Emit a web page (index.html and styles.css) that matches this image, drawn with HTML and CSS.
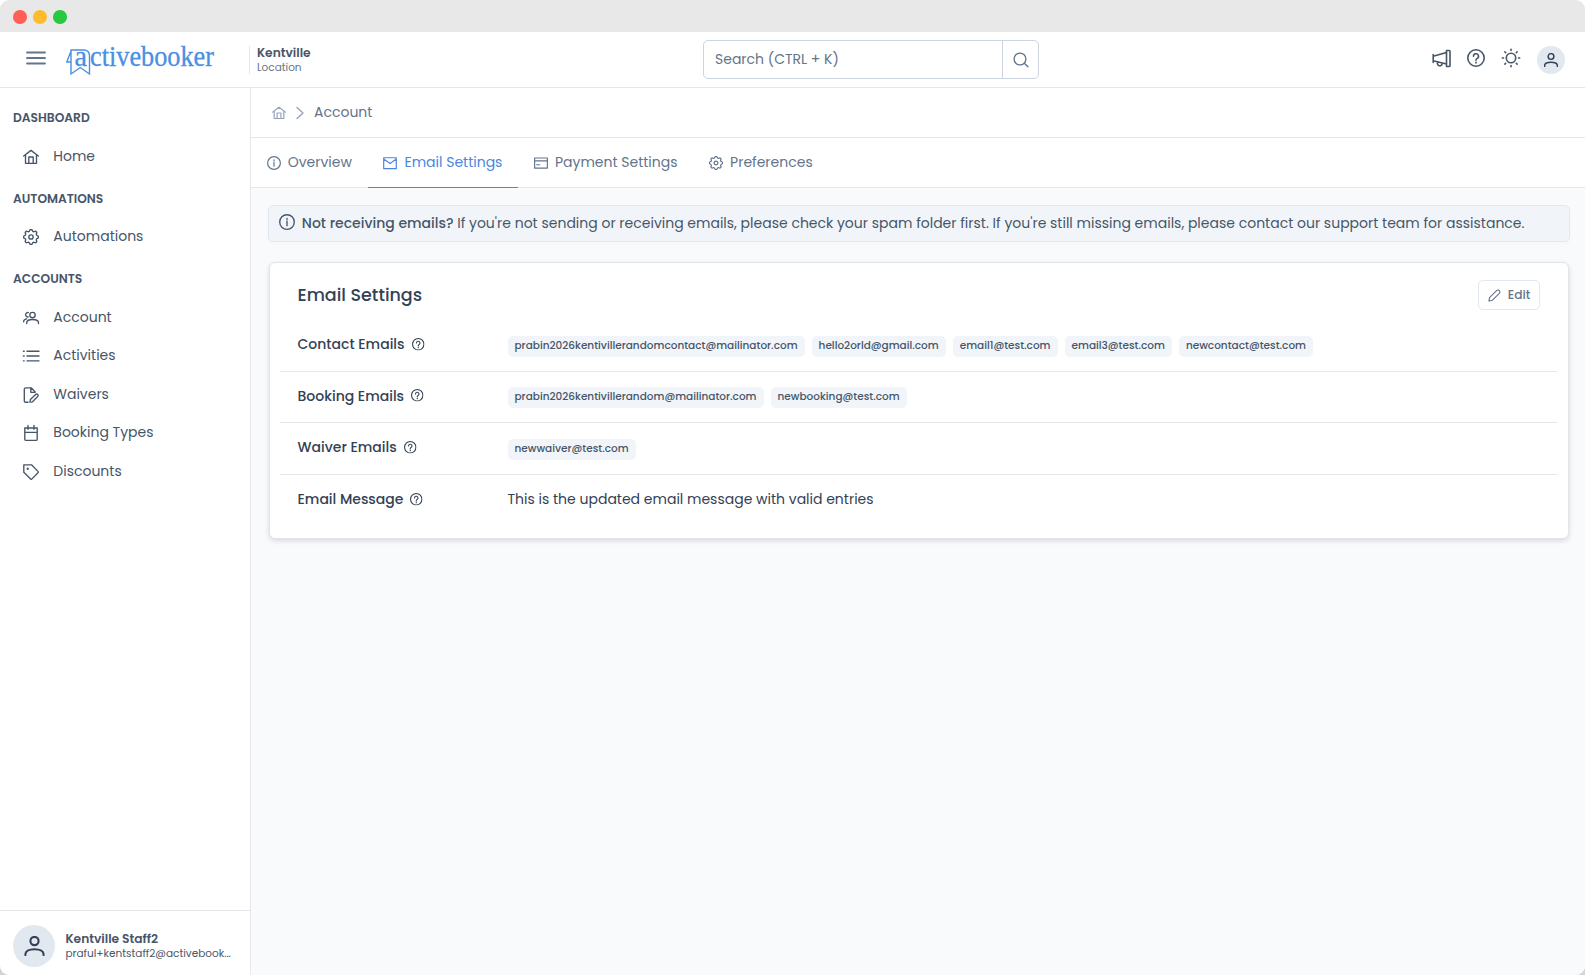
FILE: index.html
```html
<!DOCTYPE html>
<html lang="en">

<head>
    <meta charset="UTF-8">
    <meta name="viewport" content="width=device-width, initial-scale=1.0">
    <title>Activebooker - Email Settings</title>
    <link rel="stylesheet" href="styles.css">
</head>

<body>
    <!-- Shared icons -->
    <svg class="sprite" width="0" height="0">
        <symbol id="i-home" viewBox="0 0 16 16">
            <path d="M.7 7 8 1.4 15.300 7M2.500 5.800V14.300h11V5.800M5.800 14.300V8h4.400v6.300" />
        </symbol>
        <symbol id="i-gear" viewBox="2.400 2.400 19.200 19.200">
            <path d="M10.325 4.317c.426 -1.756 2.924 -1.756 3.350 0a1.724 1.724 0 0 0 2.573 1.066c1.543 -.94 3.310 .826 2.370 2.370a1.724 1.724 0 0 0 1.065 2.572c1.756 .426 1.756 2.924 0 3.350a1.724 1.724 0 0 0 -1.066 2.573c.94 1.543 -.826 3.310 -2.370 2.370a1.724 1.724 0 0 0 -2.572 1.065c-.426 1.756 -2.924 1.756 -3.350 0a1.724 1.724 0 0 0 -2.573 -1.066c-1.543 .94 -3.310 -.826 -2.370 -2.370a1.724 1.724 0 0 0 -1.065 -2.572c-1.756 -.426 -1.756 -2.924 0 -3.350a1.724 1.724 0 0 0 1.066 -2.573c-.94 -1.543 .826 -3.310 2.370 -2.370c1 .608 2.296 .07 2.572 -1.065z" />
            <circle cx="12" cy="12" r="2.600" />
        </symbol>
        <symbol id="i-info" viewBox="0 0 16 16">
            <circle cx="8" cy="8" r="7.300" />
            <path d="M8 7v4.700M8 4.300v1" />
        </symbol>
        <symbol id="i-help" viewBox="0 0 18 18">
            <circle cx="9" cy="9" r="8.200" />
            <path d="M6.500 7.200a2.500 2.500 0 1 1 3.700 2.200c-.8.400-1.200.9-1.200 1.800M9 13.200v.7" />
        </symbol>
        <symbol id="i-user" viewBox="0 0 22 22">
            <circle cx="11" cy="5.500" r="4.500" />
            <path d="M1 21v-1c0-3 3.500-5.500 10-5.500s10 2.500 10 5.500v1" />
        </symbol>
    </svg>

    <div class="window">
        <!-- Window bar -->
        <div class="titlebar">
            <span class="dot red"></span>
            <span class="dot yellow"></span>
            <span class="dot green"></span>
        </div>

        <!-- Header -->
        <header class="header">
            <div class="header-left">
                <svg class="icon menu-icon" viewBox="0 0 18 14"><path d="M0 1.500h18M0 7h18M0 12.500h18" /></svg>
                <svg class="logo" viewBox="0 0 150 34">
                    <text x="8.500" y="22.600" textLength="12.500" lengthAdjust="spacingAndGlyphs">a</text>
                    <text x="24" y="22.600" textLength="124" lengthAdjust="spacingAndGlyphs">ctivebooker</text>
                    <path d="M5 19H.8L5.300 7.200M5 31V7h12.500q6 0 6 6V31l-9.200-6.500z" />
                </svg>
                <div class="location">
                    <strong>Kentville</strong>
                    <span>Location</span>
                </div>
            </div>
            <div class="search">
                <input type="text" placeholder="Search (CTRL + K)">
                <button>
                    <svg class="icon" viewBox="0 0 16 16"><circle cx="7" cy="7" r="5.900" /><path d="m11.300 11.300 3.700 3.500" /></svg>
                </button>
            </div>
            <div class="header-right">
                <svg class="icon i-horn" viewBox="0 0 20 19"><path d="M1.200 5.500v8M1.200 7.300 14.500 3.500v11.500L1.200 11.700zM14.500 1.500h2.700a.8.800 0 0 1 .8.800v14.400a.8.800 0 0 1-.8.800h-2.700zM5.500 13v1.200a2.300 2.300 0 0 0 4.600.6V14" /></svg>
                <svg class="icon i-question"><use href="#i-help" /></svg>
                <svg class="icon i-sun" viewBox="0 0 18 18"><circle cx="9" cy="9" r="4.700" /><path d="M9 .3v1.200M9 16.500v1.200M.3 9h1.200M16.500 9h1.200M2.900 2.900l.8.800M14.300 14.300l.8.800M2.900 15.100l.8-.8M14.300 3.700l.8-.8" /></svg>
                <div class="avatar avatar-small"><svg class="icon"><use href="#i-user" /></svg></div>
            </div>
        </header>

        <div class="container">
            <!-- Sidebar -->
            <aside class="sidebar">
                <nav class="menu">
                    <h2>DASHBOARD</h2>
                    <a><svg class="icon"><use href="#i-home" /></svg><span>Home</span></a>
                    <h2>AUTOMATIONS</h2>
                    <a><svg class="icon gear"><use href="#i-gear" /></svg><span>Automations</span></a>
                    <h2>ACCOUNTS</h2>
                    <a><svg class="icon" viewBox="0 0 16 16"><circle cx="9.500" cy="5" r="2.700" /><path d="M3.700 13.500v-.7c0-2 2.200-3.300 5.800-3.300s6 1.300 6 3.300v.7M5.300 2.600a2.200 2.200 0 1 0 0 4.300M.6 11.800c0-1.800 1-2.700 3-3" /></svg><span>Account</span></a>
                    <a><svg class="icon" viewBox="0 0 16 16"><path d="M4 3.200h12M4 8h12M4 12.800h12M.4 3.200h.8M.4 8h.8M.4 12.800h.8" /></svg><span>Activities</span></a>
                    <a><svg class="icon" viewBox="0 0 16 16"><path d="M5 15.200H2.600a1.300 1.300 0 0 1-1.300-1.300V2.100A1.300 1.300 0 0 1 2.600.8h5.600l4 4.200M7.800.8v4.500h4.400M7 15.200l.4-2.600 5.200-5.100a1.400 1.400 0 0 1 2.100 2.100l-5.200 5.200z" /></svg><span>Waivers</span></a>
                    <a><svg class="icon" viewBox="0 0 16 16"><path d="M1.800 3h12.400v11.500a.8.800 0 0 1-.8.800H2.600a.8.800 0 0 1-.8-.8zM1.800 7.300h12.400M5 .3v4M11 .3v4" /></svg><span>Booking Types</span></a>
                    <a><svg class="icon" viewBox="0 0 16 16"><path d="M.8.800h7.700l6.500 6.600a1 1 0 0 1 0 1.400L9 14.900a1 1 0 0 1-1.400 0L.8 8.300z" /><circle cx="4.700" cy="4.700" r=".5" /></svg><span>Discounts</span></a>
                </nav>
                <div class="profile">
                    <div class="avatar avatar-large"><svg class="icon"><use href="#i-user" /></svg></div>
                    <div class="profile-text">
                        <strong>Kentville Staff2</strong>
                        <span>praful+kentstaff2@activebook...</span>
                    </div>
                </div>
            </aside>

            <!-- Page -->
            <main class="main">
                <div class="breadcrumb">
                    <svg class="icon"><use href="#i-home" /></svg>
                    <svg class="icon chevron" viewBox="0 0 8 14"><path d="m1 1.500 6 5.500-6 5.500" /></svg>
                    <span>Account</span>
                </div>

                <div class="tabs">
                    <a class="tab"><svg class="icon"><use href="#i-info" /></svg><span>Overview</span></a>
                    <a class="tab active"><svg class="icon" viewBox="0 0 16 16"><path d="M.8 2h14.400v12.500H.8zM.8 3.500l7.200 5 7.200-5" /></svg><span>Email Settings</span></a>
                    <a class="tab"><svg class="icon" viewBox="0 0 16 16"><path d="M.7 2.300h14.600v11.500H.7zM.7 5.500h14.600M3 10h3.500" /></svg><span>Payment Settings</span></a>
                    <a class="tab"><svg class="icon gear"><use href="#i-gear" /></svg><span>Preferences</span></a>
                </div>

                <div class="content">
                    <div class="alert">
                        <svg class="icon"><use href="#i-info" /></svg>
                        <p><strong>Not receiving emails?</strong> If you're not sending or receiving emails, please check your spam folder first. If you're still missing emails, please contact our support team for assistance.</p>
                    </div>

                    <div class="card">
                        <div class="card-header">
                            <h1>Email Settings</h1>
                            <button class="edit-btn">
                                <svg class="icon" viewBox="0 0 14 14"><path d="m1 13 .6-3.600 7.700-7.700a2 2 0 0 1 2.900 2.900l-7.700 7.700z" /></svg>
                                <span>Edit</span>
                            </button>
                        </div>
                        <div class="row">
                            <div class="label"><span>Contact Emails</span><svg class="icon"><use href="#i-help" /></svg></div>
                            <div class="chips">
                                <span class="chip">prabin2026kentivillerandomcontact@mailinator.com</span>
                                <span class="chip">hello2orld@gmail.com</span>
                                <span class="chip">email1@test.com</span>
                                <span class="chip">email3@test.com</span>
                                <span class="chip">newcontact@test.com</span>
                            </div>
                        </div>
                        <div class="row">
                            <div class="label"><span>Booking Emails</span><svg class="icon"><use href="#i-help" /></svg></div>
                            <div class="chips">
                                <span class="chip">prabin2026kentivillerandom@mailinator.com</span>
                                <span class="chip">newbooking@test.com</span>
                            </div>
                        </div>
                        <div class="row">
                            <div class="label"><span>Waiver Emails</span><svg class="icon"><use href="#i-help" /></svg></div>
                            <div class="chips">
                                <span class="chip">newwaiver@test.com</span>
                            </div>
                        </div>
                        <div class="row">
                            <div class="label"><span>Email Message</span><svg class="icon"><use href="#i-help" /></svg></div>
                            <p class="message">This is the updated email message with valid entries</p>
                        </div>
                    </div>
                </div>
            </main>
        </div>
    </div>
</body>

</html>
```

FILE: styles.css
```css
/* Reset & Fonts */
* {
    margin: 0;
    padding: 0;
    box-sizing: border-box;
}

html {
    font-size: 14px;
}

body {
    height: 100vh;
    overflow: hidden;
    background: linear-gradient(#ffffff 50%, #d4d4d4 50%);
    color: #475569;
    font-family: Poppins, Inter, sans-serif;
    font-size: 1rem;
}

input,
button {
    font: inherit;
    color: inherit;
    background: none;
    border: none;
}

.sprite {
    display: none;
}

.icon {
    flex-shrink: 0;
    width: 16px;
    height: 16px;
    fill: none;
    stroke: currentColor;
    stroke-width: 1.35;
    stroke-linecap: round;
    stroke-linejoin: round;
    overflow: visible;
}

.icon.gear {
    stroke-width: 1.65;
}

.window {
    height: 100vh;
    display: flex;
    flex-direction: column;
    border-radius: 9px;
    overflow: hidden;
    background-color: #ffffff;
}

/* Window bar */
.titlebar {
    flex-shrink: 0;
    height: 32px;
    padding: 2px 0 0 13px;
    display: flex;
    align-items: center;
    gap: 6.5px;
    background-color: #e8e8e8;
}

.dot {
    width: 13.5px;
    height: 13.5px;
    border-radius: 50%;
}

.red {
    background-color: #ff5f57;
}

.yellow {
    background-color: #febc2e;
}

.green {
    background-color: #28c840;
}

/* Header */
.header {
    flex-shrink: 0;
    height: 56px;
    display: flex;
    align-items: center;
    border-bottom: 1px solid #e5e7eb;
}

.header-left {
    width: 703px;
    display: flex;
    align-items: center;
    padding-left: 27px;
}

.menu-icon {
    width: 18px;
    height: 14px;
    margin-top: -3px;
    stroke-width: 1.8;
    color: #64748b;
}

.logo {
    width: 150px;
    height: 34px;
    margin-left: 21px;
    overflow: visible;
}

.logo text {
    font-family: "Liberation Serif", serif;
    font-size: 29.5px;
    fill: #4a8fe2;
    stroke: #4a8fe2;
    stroke-width: 0.3;
}

.logo path {
    fill: none;
    stroke: #4a8fe2;
    stroke-width: 1.4;
}

.location {
    height: 28px;
    margin: 1px 0 0 33px;
    padding: 1px 0 0 7px;
    border-left: 1px solid #e5e7eb;
    display: flex;
    flex-direction: column;
    justify-content: center;
}

.location strong,
.profile-text strong {
    font-size: 0.875rem;
    line-height: 14px;
    font-weight: 600;
}

.location span,
.profile-text span {
    font-size: 0.75rem;
    line-height: 15px;
}

.location span {
    color: #64748b;
}

.search {
    width: 336px;
    height: 39px;
    display: flex;
    border: 1px solid #cbd5e1;
    border-radius: 5px;
}

.search input {
    flex: 1;
    min-width: 0;
    padding: 0 11px;
}

.search input::placeholder {
    color: #64748b;
    opacity: 1;
}

.search button {
    width: 36px;
    border-left: 1px solid #cbd5e1;
    display: flex;
    align-items: center;
    justify-content: center;
    color: #64748b;
}

.header-right {
    margin-left: auto;
    padding-right: 20px;
    display: flex;
    align-items: center;
}

.header-right > .icon {
    width: 18px;
    height: 18px;
    margin-top: -3px;
    stroke-width: 1.6;
}

.header-right > .i-horn {
    width: 20px;
    height: 19px;
    margin-right: 1px;
}

.i-question {
    margin-left: 14px;
}

.i-sun {
    margin: 0 17px;
}

.avatar {
    flex-shrink: 0;
    display: flex;
    align-items: center;
    justify-content: center;
    border-radius: 50%;
    background-color: #e2e8f0;
    color: #334155;
}

.avatar-small {
    width: 28px;
    height: 28px;
}

.avatar-small .icon {
    width: 14px;
    height: 14px;
    stroke-width: 2.3;
}

.avatar-large {
    width: 42px;
    height: 42px;
}

.avatar-large .icon {
    width: 21px;
    height: 20px;
    stroke-width: 2.3;
}

/* Layout */
.container {
    flex: 1;
    min-height: 0;
    display: flex;
}

/* Sidebar */
.sidebar {
    flex-shrink: 0;
    width: 251px;
    border-right: 1px solid #e5e7eb;
    display: flex;
    flex-direction: column;
}

.menu {
    flex: 1;
    padding-top: 18px;
}

.menu h2 {
    height: 24px;
    margin-bottom: 7px;
    padding-left: 13px;
    font-size: 0.875rem;
    line-height: 24px;
    font-weight: 600;
}

.menu a {
    height: 38.5px;
    padding-left: 23.3px;
    display: flex;
    align-items: center;
    gap: 14px;
}

.menu a + h2 {
    margin-top: 11px;
}

.menu a .icon {
    margin-top: 1px;
}

.profile {
    height: 65px;
    padding: 5px 13px 0;
    display: flex;
    align-items: center;
    gap: 10.5px;
    border-top: 1px solid #e5e7eb;
}

.profile-text {
    padding-top: 1px;
    display: flex;
    flex-direction: column;
    white-space: nowrap;
}

/* Page */
.main {
    flex: 1;
    min-width: 0;
    background-color: #f8fafc;
}

.breadcrumb {
    height: 50px;
    padding-left: 21px;
    display: flex;
    align-items: center;
    background-color: #ffffff;
    border-bottom: 1px solid #e5e7eb;
    color: #64748b;
}

.breadcrumb .icon {
    width: 14px;
    height: 14px;
    color: #94a3b8;
}

.breadcrumb .chevron {
    width: 8px;
    height: 14px;
    margin: 0 10px;
}

/* Tabs */
.tabs {
    height: 50px;
    display: flex;
    background-color: #ffffff;
    border-bottom: 1px solid #e5e7eb;
    color: #64748b;
}

.tab {
    height: 50px;
    padding: 0 15.75px;
    display: flex;
    align-items: center;
    gap: 7px;
    white-space: nowrap;
    border-bottom: 1px solid transparent;
}

.tab .icon {
    width: 14px;
    height: 14px;
}

.tab.active {
    color: #4a86e0;
    border-bottom-color: #4a86e0;
}

.content {
    padding: 17px 15px;
}

/* Alert */
.alert {
    height: 37px;
    padding: 0 10px;
    display: flex;
    align-items: center;
    gap: 6.8px;
    margin: 0 0 20px 2px;
    white-space: nowrap;
    background-color: #f1f5f9;
    border: 1px solid #e2e8f0;
    border-radius: 5px;
    box-shadow: 0 2px 4px rgba(0, 0, 0, 0.02);
}

.alert .icon {
    margin-top: -3px;
}

.alert strong {
    font-weight: 500;
}

/* Card */
.card {
    height: 277px;
    margin: 0 1px 0 3px;
    padding: 0 11px 0 10px;
    background-color: #ffffff;
    border: 1px solid #e2e4ea;
    border-radius: 6px;
    box-shadow: 0 2px 5px rgba(0, 0, 0, 0.13);
}

.card-header {
    height: 57px;
    padding: 7px 17px 0 17.5px;
    display: flex;
    align-items: center;
    justify-content: space-between;
    color: #334155;
}

.card-header h1 {
    font-size: 1.25rem;
    font-weight: 500;
}

.edit-btn {
    width: 62px;
    height: 30px;
    display: flex;
    align-items: center;
    justify-content: center;
    gap: 7px;
    border: 1px solid #e2e8f0;
    border-radius: 5px;
    color: #64748b;
    font-size: 0.875rem;
    font-weight: 500;
}

.edit-btn .icon {
    width: 13px;
    height: 13px;
    stroke-width: 1.2;
}

.row {
    height: 51.5px;
    padding: 0 17px 1px 17.5px;
    display: flex;
    align-items: center;
    border-bottom: 1px solid #e5e7eb;
    color: #334155;
}

.row:last-child {
    border-bottom: none;
}

.label {
    width: 210px;
    display: flex;
    align-items: center;
    gap: 7px;
    font-weight: 500;
}

.label .icon {
    width: 12.5px;
    height: 12.5px;
    margin-top: -2px;
    stroke-width: 1.6;
}

.chips {
    display: flex;
    gap: 7px;
    padding-top: 3px;
}

.chip {
    height: 21px;
    padding: 0 7px;
    font-size: 0.75rem;
    line-height: 19px;
    font-weight: 500;
    white-space: nowrap;
    color: #475569;
    background-color: #f1f5f9;
    border-radius: 5px;
}
```
